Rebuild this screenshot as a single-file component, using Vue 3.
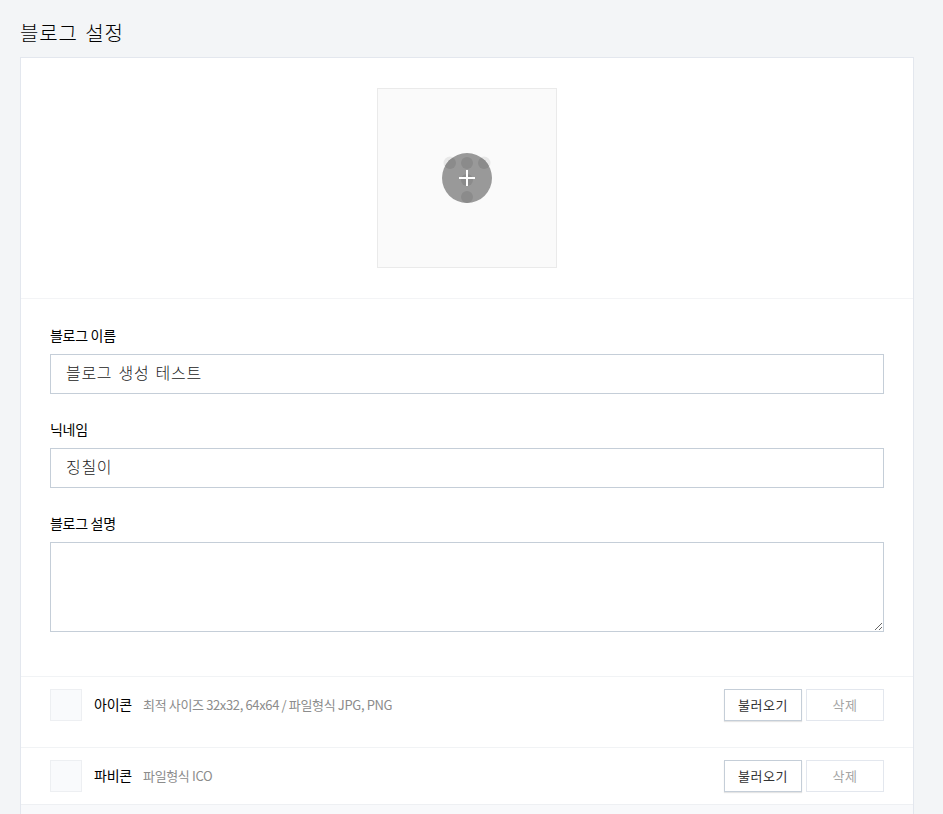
<script setup>
const fields = [
  { label: '블로그 이름', value: '블로그 생성 테스트' },
  { label: '닉네임', value: '징칠이' },
]
const files = [
  { name: '아이콘', hint: '최적 사이즈 32x32, 64x64 / 파일형식 JPG, PNG', cls: 'first' },
  { name: '파비콘', hint: '파일형식 ICO', cls: '' },
]
</script>

<template>
  <div class="page">
    <h1 class="title">블로그 설정</h1>
    <div class="card">
      <section class="photo-wrap">
        <div class="photo">
          <svg class="photo-icon" width="60" height="60" viewBox="0 0 60 60" aria-hidden="true">
            <defs>
              <clipPath id="disc"><circle cx="30" cy="30" r="25" /></clipPath>
            </defs>
            <circle cx="13" cy="15" r="6.5" fill="#e8e8e8" />
            <circle cx="47" cy="15" r="6.5" fill="#e8e8e8" />
            <circle cx="30" cy="30" r="25" fill="#999" />
            <g fill="#8b8b8b" clip-path="url(#disc)">
              <circle cx="13" cy="15" r="6" />
              <circle cx="30" cy="15" r="6" />
              <circle cx="47" cy="15" r="6" />
              <circle cx="30" cy="32" r="6" />
              <circle cx="30" cy="49" r="6" />
            </g>
            <path d="M22 30h16M30 22v16" stroke="#fff" stroke-width="2" fill="none" />
          </svg>
        </div>
      </section>

      <section class="form">
        <div v-for="f in fields" :key="f.label" class="field">
          <label class="label">{{ f.label }}</label>
          <input class="input" type="text" :value="f.value" />
        </div>
        <div class="field">
          <label class="label">블로그 설명</label>
          <textarea class="textarea"></textarea>
        </div>
      </section>

      <section v-for="r in files" :key="r.name" class="row" :class="r.cls">
        <div class="thumb"></div>
        <strong class="name">{{ r.name }}</strong>
        <span class="hint">{{ r.hint }}</span>
        <div class="actions">
          <button class="btn primary" type="button">불러오기</button>
          <button class="btn muted" type="button">삭제</button>
        </div>
      </section>
      <div class="rest"></div>
    </div>
  </div>
</template>

<style>
html, body { margin: 0; background: #f3f5f7; }
</style>

<style scoped>
.page {
  height: 814px;
  overflow: hidden;
  box-sizing: border-box;
  padding: 0 29px 0 20px;
  background: #f3f5f7;
  font-family: "Noto Sans CJK KR", "Noto Sans", sans-serif;
}
.title {
  margin: 0;
  height: 57px;
  box-sizing: border-box;
  padding-top: 18px;
  font-size: 20px;
  line-height: 30px;
  font-weight: 300;
  letter-spacing: 0.8px;
  word-spacing: 2.5px;
  color: #000;
}
.card {
  background: #fff;
  border: 1px solid #e3e7ee;
  border-bottom: 0;
}
.photo-wrap {
  display: flex;
  justify-content: center;
  padding: 30px 0;
  border-bottom: 1px solid #f3f4f6;
}
.photo {
  width: 180px;
  height: 180px;
  box-sizing: border-box;
  display: flex;
  align-items: center;
  justify-content: center;
  background: #fafafa;
  border: 1px solid #eaeaea;
}
.form {
  padding: 26px 29px 44px;
  display: flex;
  flex-direction: column;
  gap: 25px;
}
.field { display: flex; flex-direction: column; }
.label {
  font-size: 14px;
  line-height: 20px;
  height: 20px;
  margin-bottom: 9px;
  letter-spacing: -0.3px;
  color: #000;
}
.input, .textarea {
  display: block;
  width: 100%;
  box-sizing: border-box;
  border: 1px solid #c5ced8;
  border-radius: 0;
  outline: none;
  background: #fff;
  font-family: inherit;
  color: #222;
}
.input {
  height: 40px;
  padding: 0 15px 5px;
  font-size: 16px;
  font-weight: 300;
  letter-spacing: 0.7px;
  word-spacing: 2px;
}
.textarea {
  height: 90px;
  padding: 8px 15px;
  font-size: 16px;
  resize: vertical;
}
.row {
  display: flex;
  align-items: center;
  height: 32px;
  padding: 12px 29px;
  border-top: 1px solid #f1f3f5;
}
.row.first { padding-bottom: 26px; }
.thumb {
  width: 32px;
  height: 32px;
  box-sizing: border-box;
  background: #f9fafc;
  border: 1px solid #edeff2;
  margin-right: 12px;
  flex: none;
}
.name {
  font-size: 14px;
  font-weight: 400;
  letter-spacing: -0.2px;
  color: #000;
  margin-right: 11px;
  margin-bottom: 2px;
}
.hint {
  font-size: 13px;
  color: #8c8c8c;
  letter-spacing: -0.36px;
  margin-bottom: 2px;
}
.actions { margin-left: auto; display: flex; gap: 4px; }
.btn {
  width: 78px;
  height: 32px;
  box-sizing: border-box;
  background: #fff;
  font-family: inherit;
  font-size: 13px;
  letter-spacing: 0.5px;
  padding: 0 0 2px;
  border-radius: 0;
}
.btn.primary {
  border: 1px solid #c5ced8;
  color: #333;
  box-shadow: 0 1px 1px rgba(0, 0, 0, 0.1);
}
.btn.muted {
  border: 1px solid #e3e7ee;
  color: #a5a5a5;
}
.rest {
  height: 20px;
  background: #f8f9fb;
  border-top: 1px solid #eef0f3;
}
</style>
